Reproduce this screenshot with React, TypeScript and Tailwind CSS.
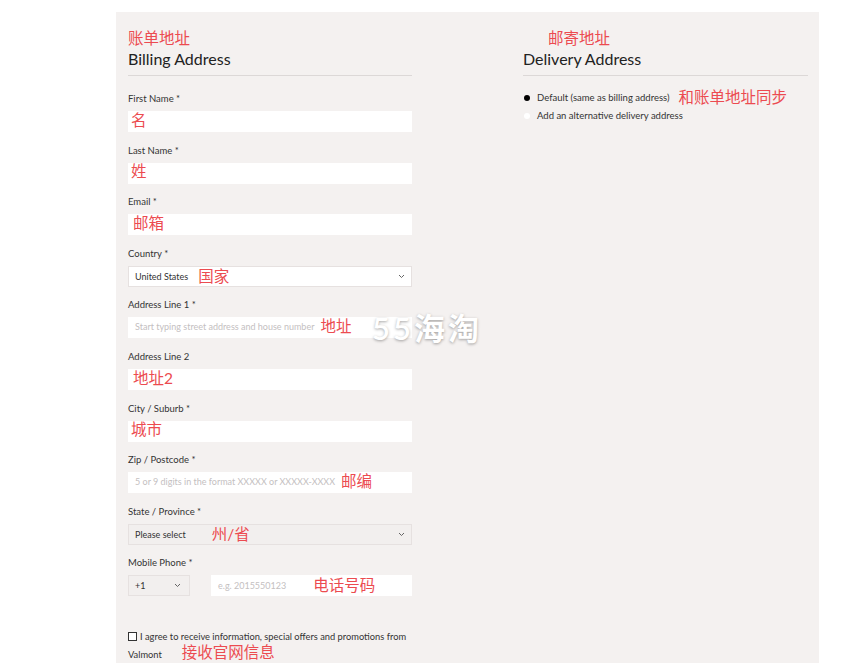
import React from "react";

const red = "text-[#ec4b50]";

function Label({ text }: { text: string }) {
  return <div className="h-[12px] text-[9.5px] leading-[12px] text-[#333]">{text}</div>;
}

function Chevron() {
  return (
    <svg width="7" height="5" viewBox="0 0 7 5" className="shrink-0">
      <path d="M1 1l2.5 2.5L6 1" fill="none" stroke="#555" strokeWidth="0.9" />
    </svg>
  );
}

function Field({
  label,
  note,
  placeholder,
  gap,
}: {
  label: string;
  note?: string;
  placeholder?: string;
  gap?: string;
}) {
  return (
    <div>
      <Label text={label} />
      <div className="mt-[6px] flex h-[21px] items-center bg-white pb-[2px] pl-[3px]">
        {placeholder && (
          <span className="ml-[4px] text-[9px] text-[#c4c0bf]">{placeholder}</span>
        )}
        {note && (
          <span className={`${red} ${gap ?? ""} text-[15.5px] leading-none`}>{note}</span>
        )}
      </div>
    </div>
  );
}

function SelectField({
  label,
  value,
  note,
  gap,
  grey,
}: {
  label: string;
  value: string;
  note: string;
  gap: string;
  grey?: boolean;
}) {
  return (
    <div>
      <Label text={label} />
      <div
        className={`mt-[6px] flex h-[21px] items-center border border-[#e6e1e0] pl-[6px] pr-[6px] ${
          grey ? "bg-[#f2efee]" : "bg-white"
        }`}
      >
        <span className="text-[9px] text-[#333]">{value}</span>
        <span className={`${red} ${gap} text-[15.5px] leading-none`}>{note}</span>
        <span className="flex-1" />
        <Chevron />
      </div>
    </div>
  );
}

export default function App() {
  return (
    <div
      className="relative min-h-[663px] bg-white pt-[12px]"
      style={{ fontFamily: '"Lato", "Noto Sans CJK SC", sans-serif' }}
    >
      <div className="ml-[116px] h-[651px] w-[703px] bg-[#f4f1f0] px-[12px] pt-[17px]">
        <div className="grid grid-cols-[284px_285px] gap-x-[111px]">
          {/* Billing */}
          <div>
            <div className={`${red} text-[15.5px] leading-[18px]`}>账单地址</div>
            <div className="mt-[2px] text-[16px] leading-[20px] text-[#222]">Billing Address</div>
            <div className="mt-[6px] border-b border-[#dcd8d7]" />

            <div className="mt-[17px] flex flex-col gap-y-[12.6px]">
              <Field label="First Name  *" note="名" />
              <Field label="Last Name *" note="姓" />
              <Field label="Email *" note="邮箱" gap="ml-[2px]" />
              <SelectField label="Country *" value="United States" note="国家" gap="ml-[10px]" />
              <Field
                label="Address Line 1 *"
                placeholder="Start typing street address and house number"
                note="地址"
                gap="ml-[6px]"
              />
              <Field label="Address Line 2" note="地址2" gap="ml-[2px]" />
              <Field label="City / Suburb *" note="城市" />
              <Field
                label="Zip / Postcode *"
                placeholder="5 or 9 digits in the format XXXXX or XXXXX-XXXX"
                note="邮编"
                gap="ml-[6px]"
              />
              <SelectField
                label="State / Province *"
                value="Please select"
                note="州/省"
                gap="ml-[26px]"
                grey
              />
              <div>
                <Label text="Mobile Phone *" />
                <div className="mt-[6px] flex h-[21px] gap-x-[21px]">
                  <div className="flex w-[62px] items-center justify-between border border-[#e6e1e0] bg-[#f2efee] pl-[6px] pr-[8px]">
                    <span className="text-[9px] text-[#333]">+1</span>
                    <Chevron />
                  </div>
                  <div className="flex flex-1 items-center bg-white pl-[7px]">
                    <span className="text-[9px] text-[#c4c0bf]">e.g. 2015550123</span>
                    <span className={`${red} ml-[27px] text-[15.5px] leading-none`}>电话号码</span>
                  </div>
                </div>
              </div>
            </div>

            <div className="mt-[33px] text-[9.3px] leading-[16px] text-[#333]">
              <span className="mr-[3px] inline-block h-[9px] w-[9px] border border-[#333] bg-white align-[-1px]" />
              I agree to receive information, special offers and promotions from
              <br />
              Valmont
              <span className={`${red} ml-[20px] text-[15.5px] leading-none`}>接收官网信息</span>
            </div>
          </div>

          {/* Delivery */}
          <div>
            <div className={`${red} pl-[25px] text-[15.5px] leading-[18px]`}>邮寄地址</div>
            <div className="mt-[2px] text-[16px] leading-[20px] text-[#222]">Delivery Address</div>
            <div className="mt-[6px] border-b border-[#dcd8d7]" />
            <div className="mt-[13px] flex h-[18px] items-center">
              <span className="ml-[1px] h-[6px] w-[6px] rounded-full bg-black" />
              <span className="ml-[7px] text-[9.5px] text-[#333]">Default (same as billing address)</span>
              <span className={`${red} ml-[9px] text-[15.5px] leading-none`}>和账单地址同步</span>
            </div>
            <div className="flex h-[18px] items-center">
              <span className="ml-[1px] h-[6px] w-[6px] rounded-full bg-white" />
              <span className="ml-[7px] text-[9.5px] text-[#333]">Add an alternative delivery address</span>
            </div>
          </div>
        </div>
      </div>

      {/* watermark */}
      <div
        className="absolute left-[372px] top-[313px] text-[31px] font-semibold leading-none tracking-[3px] text-white"
        style={{ textShadow: "0 1px 3px rgba(0,0,0,0.35)" }}
      >
        55海淘
      </div>
    </div>
  );
}
